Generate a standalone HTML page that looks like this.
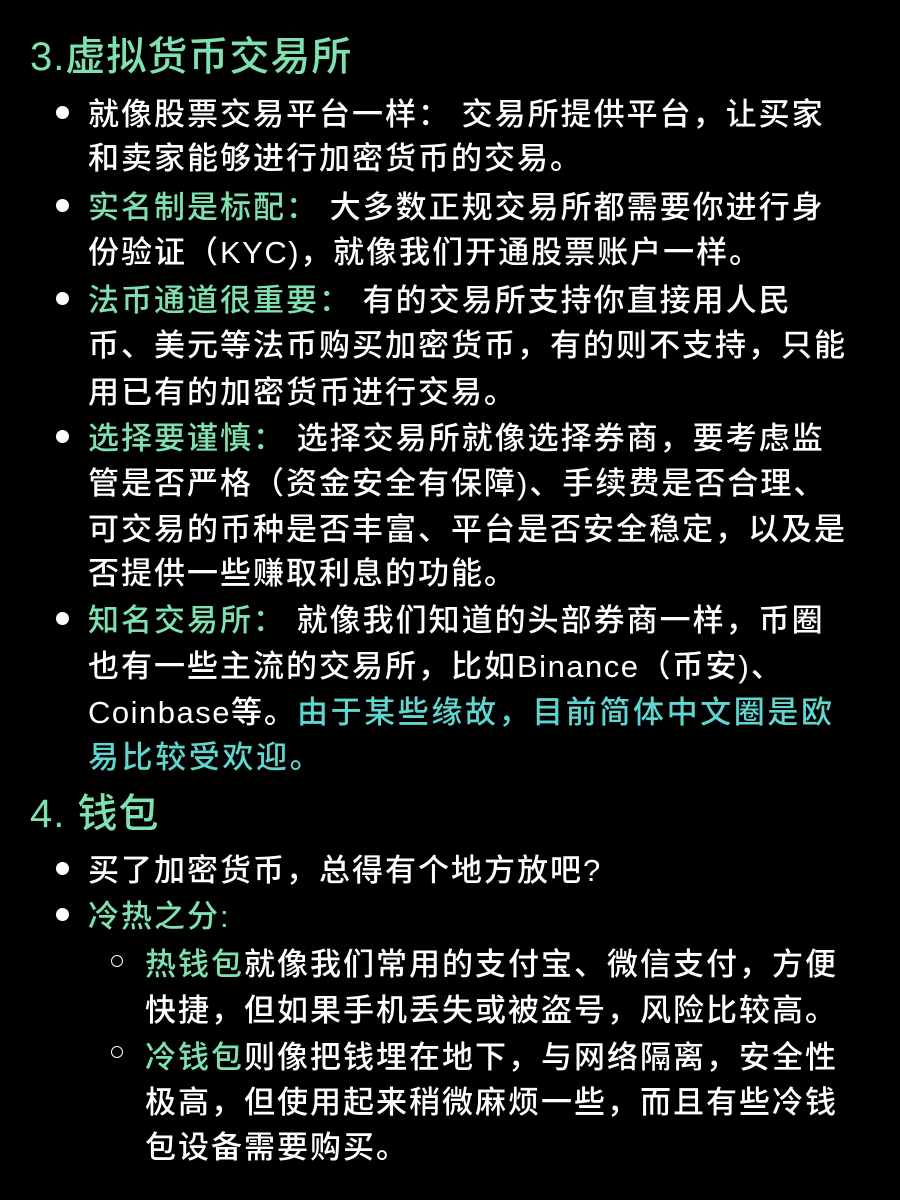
<!DOCTYPE html>
<html><head><meta charset="utf-8"><style>
html,body{margin:0;padding:0;background:#000;}
body{width:900px;height:1200px;position:relative;overflow:hidden;font-family:"Liberation Sans","Noto Sans CJK SC",sans-serif;color:#fff;}
.l{position:absolute;left:88px;font-size:31px;line-height:46px;height:46px;letter-spacing:2px;white-space:nowrap;font-weight:500;}
.s{left:145px;}
.h{position:absolute;left:30px;font-size:40px;line-height:50px;color:#7fe0b0;white-space:nowrap;letter-spacing:1px;font-weight:500;}
.g{color:#7fe0b0;}
.c{color:#5fd6d0;letter-spacing:2.6px;}
.e{letter-spacing:1.5px;}
.d{position:absolute;left:56px;width:13px;height:13px;border-radius:50%;background:#fff;}
.o{position:absolute;left:111px;width:10px;height:10px;border-radius:50%;border:1.5px solid #fff;}
</style></head><body>
<div class="h" style="top:32px">3.虚拟货币交易所</div>
<div class="d" style="top:106px"></div>
<div class="l" style="top:92px">就像股票交易平台一样： 交易所提供平台，让买家</div>
<div class="l" style="top:136px">和卖家能够进行加密货币的交易。</div>
<div class="d" style="top:199px"></div>
<div class="l" style="top:185px"><span class="g">实名制是标配：</span> 大多数正规交易所都需要你进行身</div>
<div class="l" style="top:230px">份验证（<span class="e">KYC)</span>，就像我们开通股票账户一样。</div>
<div class="d" style="top:292px"></div>
<div class="l" style="top:278px"><span class="g">法币通道很重要：</span> 有的交易所支持你直接用人民</div>
<div class="l" style="top:323px">币、美元等法币购买加密货币，有的则不支持，只能</div>
<div class="l" style="top:370px">用已有的加密货币进行交易。</div>
<div class="d" style="top:430px"></div>
<div class="l" style="top:416px"><span class="g">选择要谨慎：</span> 选择交易所就像选择券商，要考虑监</div>
<div class="l" style="top:461px">管是否严格（资金安全有保障)、手续费是否合理、</div>
<div class="l" style="top:507px">可交易的币种是否丰富、平台是否安全稳定，以及是</div>
<div class="l" style="top:551px">否提供一些赚取利息的功能。</div>
<div class="d" style="top:612px"></div>
<div class="l" style="top:598px"><span class="g">知名交易所：</span> 就像我们知道的头部券商一样，币圈</div>
<div class="l" style="top:644px">也有一些主流的交易所，比如<span class="e">Binance</span>（币安)、</div>
<div class="l" style="top:690px"><span class="e">Coinbase</span>等。<span class="c">由于某些缘故，目前简体中文圈是欧</span></div>
<div class="l c" style="top:735px">易比较受欢迎。</div>
<div class="h" style="top:789px">4. 钱包</div>
<div class="d" style="top:862px"></div>
<div class="l" style="top:848px">买了加密货币，总得有个地方放吧?</div>
<div class="d" style="top:908px"></div>
<div class="l g" style="top:894px">冷热之分:</div>
<div class="o" style="top:955px"></div>
<div class="l s" style="top:942px"><span class="g">热钱包</span>就像我们常用的支付宝、微信支付，方便</div>
<div class="l s" style="top:988px">快捷，但如果手机丢失或被盗号，风险比较高。</div>
<div class="o" style="top:1046px"></div>
<div class="l s" style="top:1035px"><span class="g">冷钱包</span>则像把钱埋在地下，与网络隔离，安全性</div>
<div class="l s" style="top:1080px">极高，但使用起来稍微麻烦一些，而且有些冷钱</div>
<div class="l s" style="top:1125px">包设备需要购买。</div>
</body></html>
